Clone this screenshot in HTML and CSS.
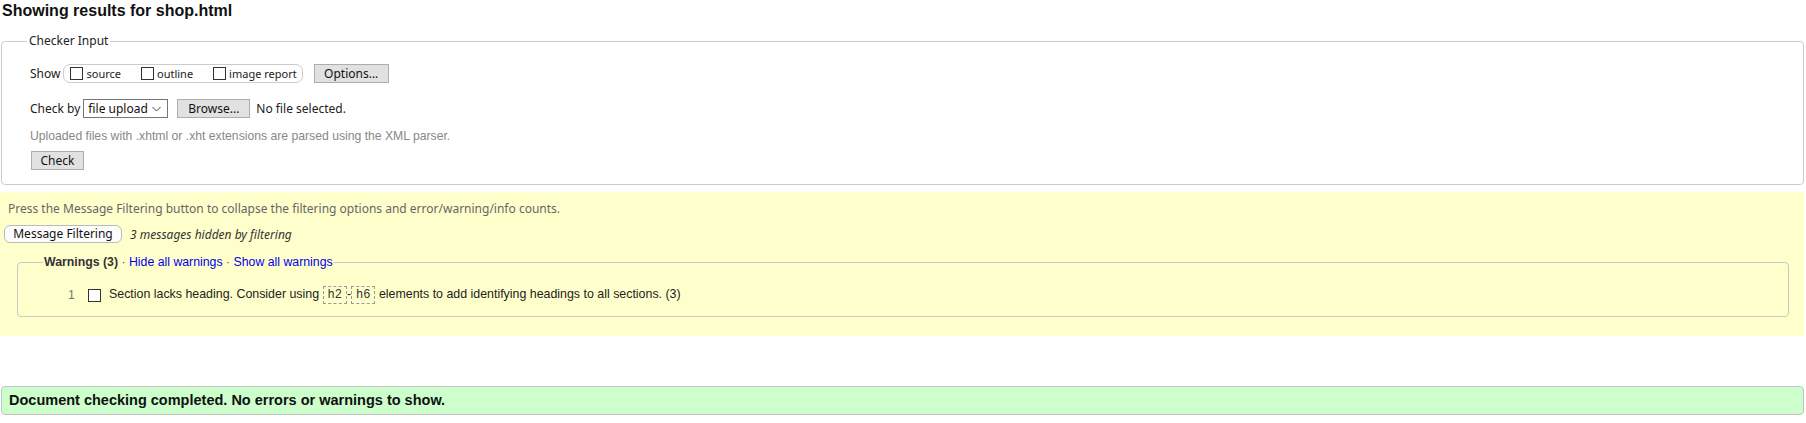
FILE: index.html
```html
<!DOCTYPE html>
<html>
<head>
<meta charset="utf-8">
<title>Showing results for shop.html</title>
<link rel="stylesheet" href="styles.css">
</head>
<body>
<h2 class="title">Showing results for shop.html</h2>
<fieldset class="checker">
  <legend class="checker-legend">Checker Input</legend>
  <div class="row show-row">
    <span class="lbl">Show</span>
    <span class="show-box">
      <label class="opt"><input type="checkbox" class="cb"><span>source</span></label>
      <label class="opt"><input type="checkbox" class="cb"><span>outline</span></label>
      <label class="opt"><input type="checkbox" class="cb"><span>image report</span></label>
    </span>
    <button class="btn btn-options">Options...</button>
  </div>
  <div class="row by-row">
    <span class="lbl">Check by</span>
    <span class="select">file upload
      <svg class="chev" width="9" height="6" viewBox="0 0 9 6"><path d="M0.5 1 L4.5 5 L8.5 1" fill="none" stroke="#444" stroke-width="1"/></svg>
    </span>
    <button class="btn btn-browse">Browse...</button>
    <span class="nofile">No file selected.</span>
  </div>
  <p class="hint">Uploaded files with .xhtml or .xht extensions are parsed using the XML parser.</p>
  <div class="row check-row"><button class="btn btn-check">Check</button></div>
</fieldset>

<div class="filters">
  <p class="press">Press the Message Filtering button to collapse the filtering options and error/warning/info counts.</p>
  <div class="mf-row">
    <button class="mf-btn">Message Filtering</button>
    <em class="hidden-note">3 messages hidden by filtering</em>
  </div>
  <fieldset class="warnings">
    <legend class="warn-legend"><b>Warnings (3)</b> <span class="dot">·</span> <a href="#" class="lnk">Hide all warnings</a> <span class="dot">·</span> <a href="#" class="lnk">Show all warnings</a></legend>
    <div class="msg">
      <span class="num">1</span>
      <input type="checkbox" class="cb cb-msg">
      <span class="msg-text">Section lacks heading. Consider using <code class="code">h2</code>-<code class="code">h6</code> elements to add identifying headings to all sections. (3)</span>
    </div>
  </fieldset>
</div>

<div class="success">Document checking completed. No errors or warnings to show.</div>
</body>
</html>
```

FILE: styles.css
```css
html, body {
  margin: 0;
  padding: 0;
  background: #fff;
  color: #222;
}
body {
  font-family: "Liberation Sans", Arial, sans-serif;
  font-size: 13px;
}
.title {
  margin: 0;
  padding: 0 1px 0 2px;
  height: 24px;
  line-height: 21px;
  font-size: 16px;
  font-weight: bold;
  color: #111;
}
.checker {
  margin: 10px 2px 0 1px;
  padding: 6px 10px 14px 28px;
  border: 1px solid #ccc;
  border-radius: 4px;
  font-family: "Noto Sans", sans-serif;
  font-size: 12px;
  color: #222;
}
.checker-legend {
  padding: 0 2px;
  margin-left: -3px;
  font-size: 12px;
  line-height: 14px;
  color: #222;
}
.row {
  display: flex;
  align-items: center;
}
.show-row {
  height: 19px;
  margin-top: 10px;
}
.lbl {
  margin-right: 3px;
}
.show-box {
  display: flex;
  align-items: center;
  height: 17px;
  border: 1px solid #ccc;
  border-radius: 7px;
  padding: 0 5px 0 6px;
  gap: 20px;
}
.opt {
  display: flex;
  align-items: center;
  font-size: 11px;
}
.opt span { margin-left: 3px; }
.cb {
  appearance: none;
  -webkit-appearance: none;
  width: 13px;
  height: 13px;
  margin: 0;
  border: 1px solid #333;
  background: #fff;
  box-sizing: border-box;
  border-radius: 0;
}
.btn {
  font-family: "Noto Sans", sans-serif;
  font-size: 12px;
  color: #111;
  background: #e1e1e1;
  border: 1px solid #adadad;
  height: 19px;
  padding: 0;
  line-height: 17px;
  border-radius: 0;
  margin: 0;
}
.btn-options { margin-left: 11px; width: 75px; }
.by-row { height: 19px; margin-top: 16px; }
.select {
  display: inline-flex;
  align-items: center;
  box-sizing: border-box;
  width: 85px;
  height: 19px;
  border: 1px solid #767676;
  padding: 0 0 0 4px;
  font-size: 12px;
  color: #111;
  position: relative;
}
.chev { position: absolute; right: 6px; top: 6px; }
.btn-browse { margin-left: 9px; width: 73px; }
.nofile { margin-left: 6px; font-size: 12px; }
.hint {
  margin: 11px 0 0 0;
  font-family: "Liberation Sans", Arial, sans-serif;
  font-size: 12.2px;
  color: #888;
  line-height: 14px;
}
.check-row { margin-top: 8px; height: 19px; }
.btn-check { width: 53px; margin-left: 1px; }

.filters {
  margin: 7px 2px 0 0;
  background: #ffffcc;
  height: 144px;
  padding: 10px 0 0 0;
  box-sizing: border-box;
  font-family: "Noto Sans", sans-serif;
}
.press {
  margin: 0 0 0 8px;
  font-size: 12px;
  line-height: 14px;
  color: #666;
}
.mf-row {
  display: flex;
  align-items: center;
  margin-top: 9px;
  padding-left: 4px;
  height: 18px;
}
.mf-btn {
  font-family: "Noto Sans", sans-serif;
  font-size: 12px;
  color: #111;
  background: #fdfdfd;
  border: 1px solid #bbb;
  border-radius: 6px;
  height: 18px;
  width: 118px;
  padding: 0;
  line-height: 16px;
}
.hidden-note {
  margin-left: 8px;
  font-size: 12px;
  color: #333;
}
.warnings {
  margin: 12px 15px 0 17px;
  padding: 16px 0 11px 0;
  border: 1px solid #c8c8c8;
  border-radius: 4px;
  font-family: "Liberation Sans", Arial, sans-serif;
  font-size: 13px;
}
.warn-legend {
  padding: 0 1px;
  margin-left: 25px;
  line-height: 14px;
  font-size: 12.3px;
  color: #333;
}
.warn-legend b { color: #333; }
.dot { color: #555; }
.lnk { color: #0000ee; text-decoration: none; }
.msg {
  display: flex;
  align-items: center;
  height: 20px;
  padding-left: 50px;
}
.num { color: #777; width: 20px; font-size: 12.4px; }
.cb-msg { margin-right: 8px; }
.msg-text { color: #222; font-size: 12.4px; }
.code {
  font-family: "Liberation Mono", "Courier New", monospace;
  font-size: 12px;
  color: #333;
  border: 1px dashed #999;
  padding: 0 4px;
  display: inline-block;
  line-height: 16px;
  margin: 0;
}
.success {
  margin: 50px 2px 0 1px;
  height: 29px;
  box-sizing: border-box;
  background: #ccffcc;
  border: 1px solid #c4c4c4;
  border-radius: 4px;
  padding: 0 7px;
  line-height: 27px;
  font-family: "Liberation Sans", Arial, sans-serif;
  font-weight: bold;
  font-size: 14.5px;
  color: #111;
}
```
